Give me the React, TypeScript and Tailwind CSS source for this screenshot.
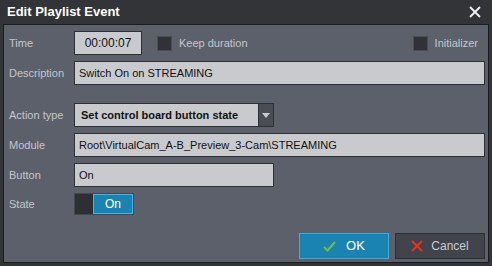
import React from 'react'

const font = { fontFamily: '"Liberation Sans", Arial, sans-serif' }

const Label = ({ text }: { text: string }) => (
  <div className="w-[70px] shrink-0 pl-[5px] text-[11px] text-[#c3c6cc]">{text}</div>
)

const Field = ({ value, className = '' }: { value: string; className?: string }) => (
  <div
    className={`flex h-[24px] items-center border border-[#2f3035] bg-[#c9cace] px-[4px] text-[11px] text-[#111] ${className}`}
  >
    {value}
  </div>
)

const Checkbox = () => (
  <div className="h-[15px] w-[15px] shrink-0 border border-[#4a4d56] bg-[#313237]" />
)

const App = () => {
  return (
    <div className="flex h-[266px] w-[492px] flex-col bg-[#333438]" style={font}>
      <div className="flex h-[24px] shrink-0 items-center justify-between pl-[7px] pr-[11px]">
        <span className="text-[13px] font-bold text-white">Edit Playlist Event</span>
        <svg width="12" height="12" viewBox="0 0 12 12">
          <path d="M1 1 L11 11 M11 1 L1 11" stroke="#f2f2f2" strokeWidth="1.8" />
        </svg>
      </div>

      <div className="mx-[3px] mb-[3px] flex flex-1 flex-col border border-[#1b1c1f] bg-[#5c606a] pr-[3px] pt-[6px]">
        <div className="flex h-[24px] items-center">
          <Label text="Time" />
          <Field value="00:00:07" className="w-[68px] justify-center !text-[12px]" />
          <div className="ml-[15px]">
            <Checkbox />
          </div>
          <span className="ml-[7px] text-[11px] text-[#c3c6cc]">Keep duration</span>
          <div className="ml-auto flex items-center">
            <Checkbox />
            <span className="ml-[7px] mr-[7px] text-[11px] text-[#c3c6cc]">Initializer</span>
          </div>
        </div>

        <div className="mt-[6px] flex items-center">
          <Label text="Description" />
          <Field value="Switch On on STREAMING" className="flex-1" />
        </div>

        <div className="mt-[18px] flex items-center">
          <Label text="Action type" />
          <Field value="Set control board button state" className="w-[185px] pl-[6px] font-bold" />
          <div className="flex h-[24px] w-[15px] items-center justify-center border border-l-0 border-[#2f3035] bg-[#4a4d56]">
            <svg width="8" height="5" viewBox="0 0 8 5">
              <path d="M0 0 H8 L4 5 Z" fill="#c9cace" />
            </svg>
          </div>
        </div>

        <div className="mt-[6px] flex items-center">
          <Label text="Module" />
          <Field value="Root\VirtualCam_A-B_Preview_3-Cam\STREAMING" className="flex-1" />
        </div>

        <div className="mt-[6px] flex items-center">
          <Label text="Button" />
          <Field value="On" className="w-[200px]" />
        </div>

        <div className="mt-[6px] flex items-center">
          <Label text="State" />
          <div className="flex h-[22px] w-[60px] border border-[#464952] bg-[#2e2f34]">
            <div className="w-[18px]" />
            <div className="flex flex-1 items-center justify-center border border-[#45b3e6] bg-[#1a83b1] text-[12px] text-white">
              On
            </div>
          </div>
        </div>

        <div className="mt-auto mb-[3px] flex justify-end gap-[6px]">
          <button className="flex h-[26px] w-[90px] items-center justify-center gap-[10px] border border-[#3fa9dc] bg-[#1a83b1] text-[13px] text-white">
            <svg width="13" height="11" viewBox="0 0 13 11">
              <path d="M1 6 L4.5 9.5 L12 1" stroke="#6cc04a" strokeWidth="2" fill="none" />
            </svg>
            OK
          </button>
          <button className="flex h-[26px] w-[90px] items-center justify-center gap-[8px] border border-[#2e2f34] bg-[#42444c] text-[12px] text-[#c8cbd0]">
            <svg width="12" height="12" viewBox="0 0 12 12">
              <path d="M1 1 L11 11 M11 1 L1 11" stroke="#e8321f" strokeWidth="2" />
            </svg>
            Cancel
          </button>
        </div>
      </div>
    </div>
  )
}

export default App
